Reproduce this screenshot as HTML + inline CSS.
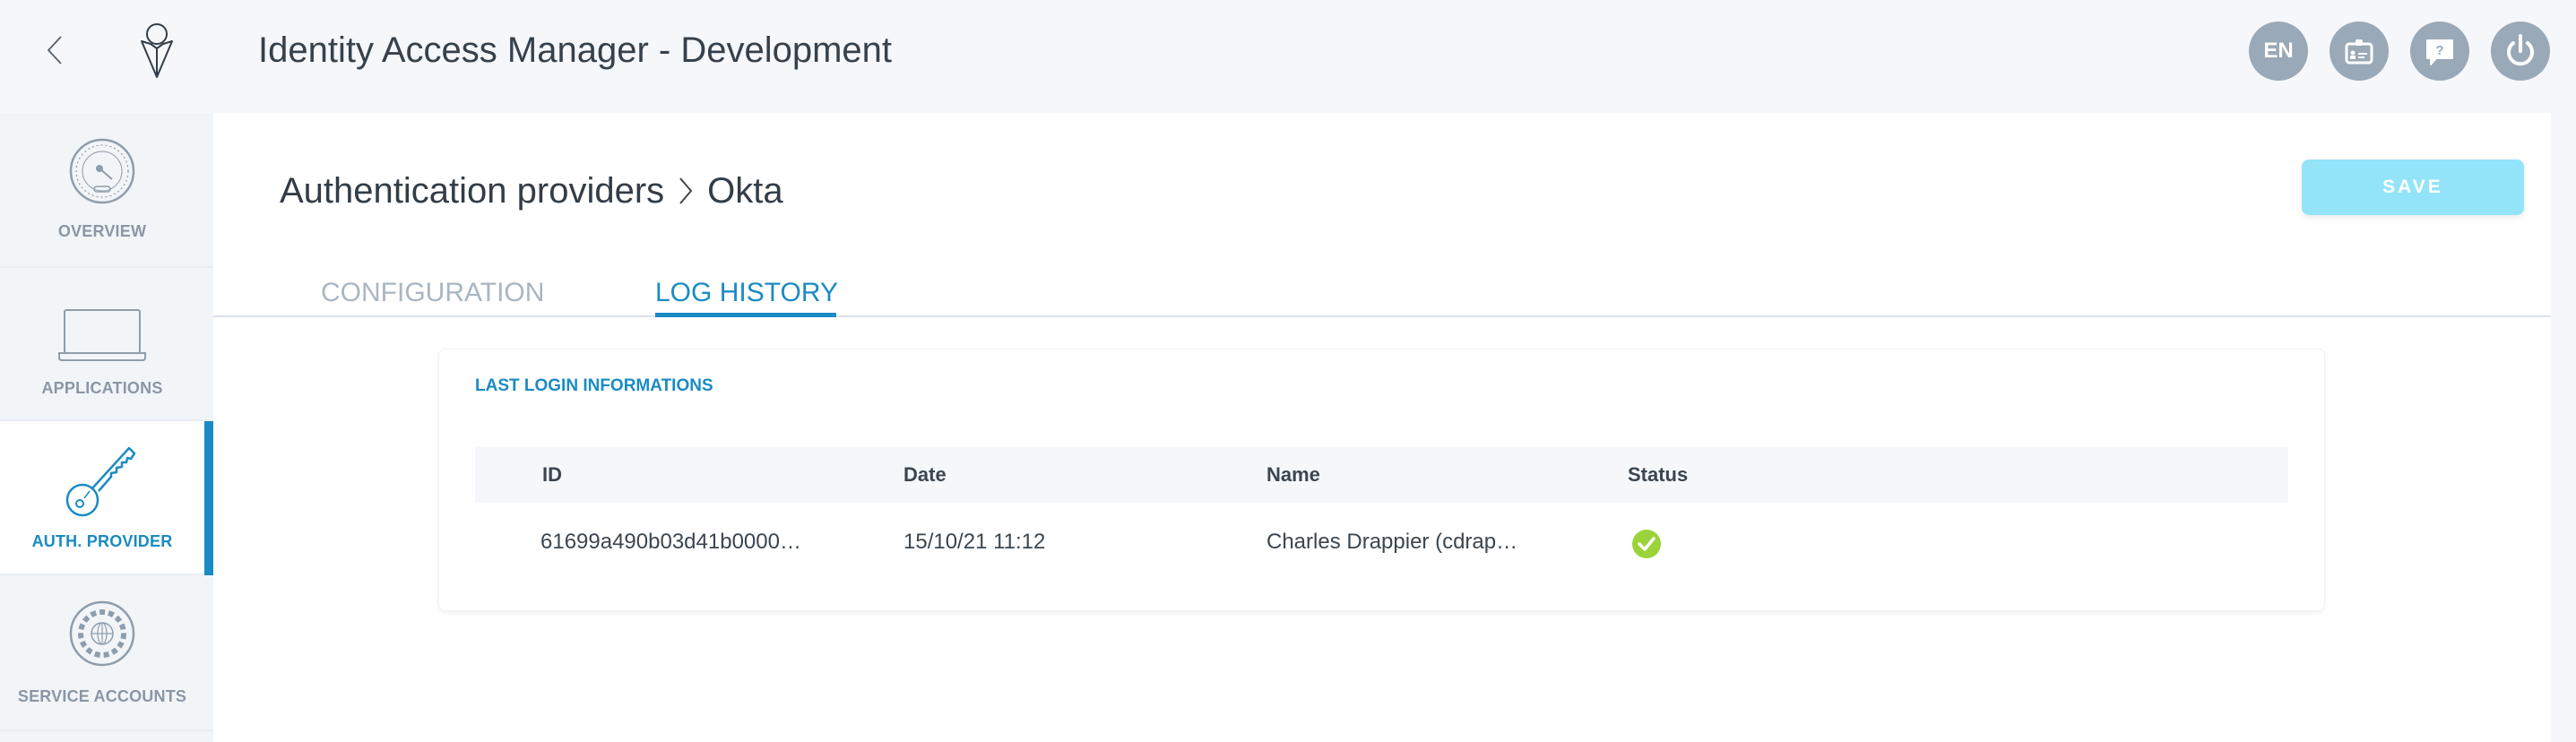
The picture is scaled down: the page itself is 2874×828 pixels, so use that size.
<!DOCTYPE html>
<html><head><meta charset="utf-8"><style>
*{margin:0;padding:0;box-sizing:border-box}
body{width:2874px;height:828px;overflow:hidden;background:#f5f7fb;font-family:"Liberation Sans",sans-serif;position:relative}
.abs{position:absolute}
.title{left:288px;top:34px;font-size:40px;color:#36414b;white-space:nowrap}
.circ{width:66px;height:66px;border-radius:50%;background:#9aa9b7;top:24px;display:flex;align-items:center;justify-content:center;color:#fff}
.side{left:0;top:126px;width:238px;height:702px;background:#f2f5f8}
.item{position:absolute;left:0;width:238px;border-bottom:2px solid #e8edf2}
.lbl{position:absolute;width:228px;text-align:center;font-size:18px;color:#8a97a4;font-weight:bold;letter-spacing:0.2px}
.panel{left:238px;top:126px;width:2608px;height:702px;background:#fff}
.th{position:absolute;top:517px;font-size:22px;font-weight:bold;color:#3b4650}
.td{position:absolute;top:591px;font-size:24px;color:#3b4650;white-space:nowrap}
</style></head><body>
<svg class="abs" style="left:50px;top:38px" width="24" height="36" viewBox="0 0 24 36"><path d="M18 3 L4 18 L18 33" fill="none" stroke="#55606b" stroke-width="1.8"/></svg>
<svg class="abs" style="left:155px;top:24px" width="44" height="66" viewBox="0 0 44 66"><circle cx="20" cy="14" r="11" fill="none" stroke="#333d47" stroke-width="2"/><path d="M3 22 L20 62 L37 22 L27 25 L20 30 L13 25 Z M20 30 L20 62" fill="none" stroke="#333d47" stroke-width="2" stroke-linejoin="round"/></svg>
<div class="abs title">Identity Access Manager - Development</div>
<div class="abs circ" style="left:2509px;font-weight:bold;font-size:24px">EN</div>
<div class="abs circ" style="left:2599px"><svg width="36" height="36" viewBox="0 0 36 36"><rect x="4" y="10" width="28" height="21" rx="3" fill="none" stroke="#fff" stroke-width="3"/><rect x="14" y="5" width="8" height="7" rx="2" fill="#fff"/><circle cx="11" cy="20" r="2.5" fill="#fff"/><rect x="8" y="23" width="6" height="4" fill="#fff"/><path d="M17 21 H27 M17 25 H24" stroke="#fff" stroke-width="2"/></svg></div>
<div class="abs circ" style="left:2689px"><svg width="36" height="36" viewBox="0 0 36 36"><path d="M4 6 H32 V26 H14 L8 33 V26 H4 Z" fill="#fff" stroke="#fff" stroke-width="2" stroke-linejoin="round"/><text x="18" y="22" text-anchor="middle" font-size="15" font-weight="bold" fill="#9aa9b7" font-family="Liberation Sans">?</text></svg></div>
<div class="abs circ" style="left:2779px"><svg width="40" height="40" viewBox="0 0 40 40"><path d="M12 11 A13 13 0 1 0 28 11" fill="none" stroke="#fff" stroke-width="4" stroke-linecap="round"/><path d="M20 3 V20" stroke="#fff" stroke-width="4" stroke-linecap="round"/></svg></div>

<div class="abs side">
 <div class="item" style="top:0;height:173px">
  <svg class="abs" style="left:77px;top:28px" width="74" height="74" viewBox="0 0 74 74"><circle cx="37" cy="37" r="35" fill="none" stroke="#8e9dab" stroke-width="2.5"/><circle cx="37" cy="37" r="29" fill="none" stroke="#8e9dab" stroke-width="1.2" stroke-dasharray="2 3"/><circle cx="37" cy="37" r="22" fill="none" stroke="#8e9dab" stroke-width="1"/><circle cx="34" cy="34" r="4" fill="#8e9dab"/><path d="M34 34 L48 46" stroke="#8e9dab" stroke-width="2"/><rect x="28" y="54" width="18" height="6" rx="3" fill="none" stroke="#8e9dab" stroke-width="1.5"/></svg>
  <div class="lbl" style="top:122px">OVERVIEW</div>
 </div>
 <div class="item" style="top:173px;height:171px">
  <svg class="abs" style="left:64px;top:45px" width="100" height="60" viewBox="0 0 100 60"><rect x="8" y="2" width="84" height="48" rx="2" fill="none" stroke="#8e9dab" stroke-width="2"/><path d="M2 50 H98 V55 Q98 58 95 58 H5 Q2 58 2 55 Z" fill="none" stroke="#8e9dab" stroke-width="2"/></svg>
  <div class="lbl" style="top:124px">APPLICATIONS</div>
 </div>
 <div class="item" style="top:344px;height:172px;background:#fff">
  <div class="abs" style="left:228px;top:0;width:10px;height:172px;background:#1a8bc4"></div>
  <svg class="abs" style="left:72px;top:26px" width="82" height="82" viewBox="0 0 82 82"><circle cx="20" cy="62" r="17" fill="none" stroke="#1a8bc4" stroke-width="2.5"/><circle cx="17" cy="66" r="4" fill="none" stroke="#1a8bc4" stroke-width="2"/><path d="M22 60 L28 52" stroke="#1a8bc4" stroke-width="1.5"/><path d="M30 50 L72 4 L78 10 L74 16 L70 15 L69 20 L64 20 L64 25 L58 26 L58 31 L52 32 L52 36 L38 52" fill="none" stroke="#1a8bc4" stroke-width="2.5" stroke-linejoin="round"/></svg>
  <div class="lbl" style="top:124px;color:#1a8bc4">AUTH. PROVIDER</div>
 </div>
 <div class="item" style="top:516px;height:174px">
  <svg class="abs" style="left:77px;top:28px" width="74" height="74" viewBox="0 0 74 74"><circle cx="37" cy="37" r="35" fill="none" stroke="#8e9dab" stroke-width="2.5"/><circle cx="37" cy="37" r="24" fill="none" stroke="#8e9dab" stroke-width="6" stroke-dasharray="6 4"/><circle cx="37" cy="37" r="12" fill="none" stroke="#8e9dab" stroke-width="1.5"/><path d="M25 37 H49 M37 25 V49" stroke="#8e9dab" stroke-width="1.2"/><ellipse cx="37" cy="37" rx="5" ry="12" fill="none" stroke="#8e9dab" stroke-width="1.2"/></svg>
  <div class="lbl" style="top:125px">SERVICE ACCOUNTS</div>
 </div>
</div>

<div class="abs panel"></div>
<div class="abs" style="left:312px;top:191px;font-size:40px;color:#333d47;white-space:nowrap">Authentication providers<span style="display:inline-block;width:48px;text-align:center"><svg width="20" height="34" viewBox="0 0 20 34" style="vertical-align:-4px"><path d="M4 3 L16 17 L4 31" fill="none" stroke="#444" stroke-width="2"/></svg></span>Okta</div>
<div class="abs" style="left:2568px;top:178px;width:248px;height:62px;border-radius:8px;background:#93e4f9;box-shadow:0 3px 8px rgba(0,0,0,0.08);color:#fff;font-weight:bold;font-size:21px;letter-spacing:3px;display:flex;align-items:center;justify-content:center">SAVE</div>
<div class="abs" style="left:358px;top:310px;font-size:30px;color:#a9b6c2">CONFIGURATION</div>
<div class="abs" style="left:731px;top:310px;font-size:30px;color:#1a8bc4">LOG HISTORY</div>
<div class="abs" style="left:238px;top:352px;width:2608px;height:2px;background:#dde3e9"></div>
<div class="abs" style="left:731px;top:349px;width:202px;height:5px;background:#1a8bc4"></div>

<div class="abs" style="left:489px;top:389px;width:2105px;height:293px;border:1px solid #eef1f4;border-radius:8px;box-shadow:0 2px 6px rgba(0,0,0,0.06);background:#fff"></div>
<div class="abs" style="left:530px;top:420px;font-size:19px;font-weight:bold;color:#1a8bc4">LAST LOGIN INFORMATIONS</div>
<div class="abs" style="left:530px;top:499px;width:2023px;height:62px;background:#f5f7fb"></div>
<div class="th" style="left:605px">ID</div>
<div class="th" style="left:1008px">Date</div>
<div class="th" style="left:1413px">Name</div>
<div class="th" style="left:1816px">Status</div>
<div class="td" style="left:603px">61699a490b03d41b0000…</div>
<div class="td" style="left:1008px">15/10/21 11:12</div>
<div class="td" style="left:1413px">Charles Drappier (cdrap…</div>
<svg class="abs" style="left:1820px;top:590px" width="34" height="34" viewBox="0 0 34 34"><circle cx="17" cy="17" r="16" fill="#9bd43a"/><path d="M9 17 L15 23 L25 11" fill="none" stroke="#fff" stroke-width="3.5" stroke-linecap="round" stroke-linejoin="round"/></svg>
</body></html>
